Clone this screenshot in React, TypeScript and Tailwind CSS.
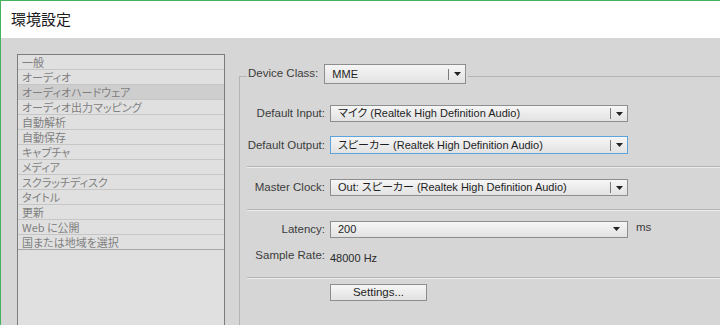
const categories = [
  '一般',
  'オーディオ',
  'オーディオハードウェア',
  'オーディオ出力マッピング',
  '自動解析',
  '自動保存',
  'キャプチャ',
  'メディア',
  'スクラッチディスク',
  'タイトル',
  '更新',
  'Web に公開',
  '国または地域を選択',
];

function Arrow() {
  return (
    <svg width="7" height="4" viewBox="0 0 7 4" className="shrink-0">
      <path d="M0 0h7L3.5 4z" fill="#222" />
    </svg>
  );
}

interface ComboProps {
  value: string;
  width: string;
  height?: string;
  focused?: boolean;
  divider?: boolean;
}

function Combo({ value, width, height = 'h-[17px]', focused, divider = true }: ComboProps) {
  return (
    <div
      className={`${width} ${height} shrink-0 flex items-center border bg-gradient-to-b from-[#f6f6f6] to-[#e2e2e2] ${
        focused ? 'border-[#5ea4dc]' : 'border-[#8e8e8e]'
      }`}
    >
      <span className="flex-1 pl-[7px] text-[11px] text-[#1e1e1e] whitespace-nowrap overflow-hidden leading-none">{value}</span>
      {divider ? (
        <div className="w-[17px] h-[11px] border-l border-[#7a7a7a] flex items-center justify-center">
          <Arrow />
        </div>
      ) : (
        <div className="w-[14px] flex items-center justify-start">
          <Arrow />
        </div>
      )}
    </div>
  );
}

function Label({ children }: { children: string }) {
  return <span className="w-[78px] shrink-0 text-right text-[#3c3c3c] whitespace-nowrap">{children}</span>;
}

function Separator() {
  return <div className="border-t border-[#b4b4b4] shadow-[0_1px_0_#ececec]" />;
}

export default function App() {
  return (
    <div className="w-[720px] h-[325px] overflow-hidden flex flex-col border-l border-t border-[#46b25c] font-['Liberation_Sans','Noto_Sans_CJK_JP',sans-serif] text-[11.5px] [font-feature-settings:'palt']">
      {/* Title bar */}
      <div className="h-[37px] shrink-0 bg-white flex items-center pl-[10px]">
        <span className="text-[15px] text-[#1a1a1a] font-['Noto_Sans_CJK_JP',sans-serif]">環境設定</span>
      </div>

      {/* Body */}
      <div className="flex-1 flex bg-[#d6d6d6] pt-[16px] pl-[16px]">
        {/* Category list */}
        <div className="w-[208px] h-[320px] shrink-0 border border-[#7c7c7c] bg-[#e0e0e0]">
          {categories.map((c, i) => (
            <div
              key={c}
              className={`h-[15px] border-b flex items-center pl-[4px] text-[11px] text-[#808080] leading-none font-['Noto_Sans_CJK_JP',sans-serif] ${
                i === 2 ? 'bg-[#cecece]' : ''
              } ${i === categories.length - 1 ? 'border-[#a6a6a6]' : 'border-[#c6c6c6]'}`}
            >
              {c}
            </div>
          ))}
        </div>

        {/* Settings group */}
        <div className="flex-1 flex flex-col ml-[14px]">
          <div className="mt-[10px] h-[20px] flex items-center">
            <div className="w-[8px] h-[8px] self-end border-l border-t border-[#b4b4b4]" />
            <span className="ml-[1px] text-[#3c3c3c] whitespace-nowrap">Device Class:</span>
            <div className="ml-[6px]">
              <Combo value="MME" width="w-[142px]" height="h-[20px]" />
            </div>
            <div className="flex-1 h-[8px] self-end border-t border-[#b4b4b4] ml-[2px]" />
          </div>

          <div className="flex-1 flex flex-col border-l border-[#b4b4b4] pl-[7px]">
            <div className="mt-[21px] flex items-center">
              <Label>Default Input:</Label>
              <div className="ml-[5px]">
                <Combo value="マイク (Realtek High Definition Audio)" width="w-[298px]" />
              </div>
            </div>
            <div className="mt-[14px] flex items-center">
              <Label>Default Output:</Label>
              <div className="ml-[5px]">
                <Combo value="スピーカー (Realtek High Definition Audio)" width="w-[298px]" height="h-[18px]" focused />
              </div>
            </div>
            <div className="mt-[12px]">
              <Separator />
            </div>
            <div className="mt-[12px] flex items-center">
              <Label>Master Clock:</Label>
              <div className="ml-[5px]">
                <Combo value="Out: スピーカー (Realtek High Definition Audio)" width="w-[298px]" />
              </div>
            </div>
            <div className="mt-[12px]">
              <Separator />
            </div>
            <div className="mt-[11px] flex">
              <Label>Latency:</Label>
              <div className="ml-[5px]">
                <Combo value="200" width="w-[298px]" divider={false} />
              </div>
              <span className="ml-[8px] -mt-[2px] text-[#3c3c3c]">ms</span>
            </div>
            <div className="mt-[9px] h-[17px] flex items-center">
              <Label>Sample Rate:</Label>
              <span className="ml-[5px] pt-[5px] text-[11px] text-[#2a2a2a]">48000 Hz</span>
            </div>
            <div className="mt-[13px]">
              <Separator />
            </div>
            <div className="mt-[6px] pl-[83px]">
              <button className="w-[97px] h-[17px] border border-[#8e8e8e] bg-gradient-to-b from-[#f6f6f6] to-[#e2e2e2] text-[#1e1e1e] leading-none">
                Settings...
              </button>
            </div>
          </div>
        </div>
      </div>
    </div>
  );
}
